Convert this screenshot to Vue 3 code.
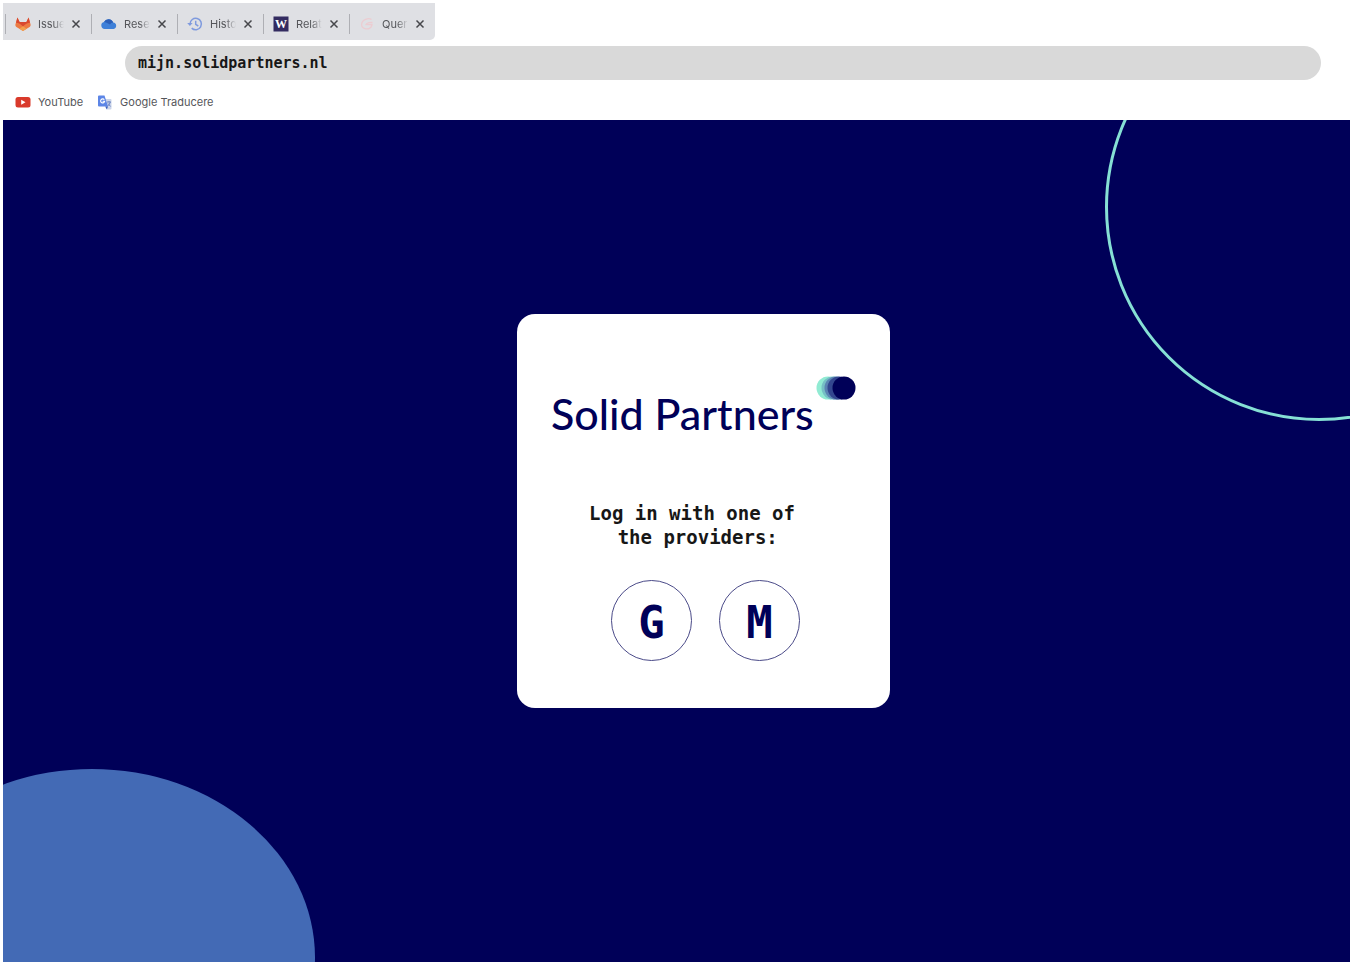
<script setup>
import { ref } from 'vue'

const address = ref('mijn.solidpartners.nl')
const tabs = [
  { icon: 'gitlab', label: 'Issue' },
  { icon: 'cloud', label: 'Rese' },
  { icon: 'history', label: 'Histo' },
  { icon: 'word', label: 'Relat' },
  { icon: 'query', label: 'Quer' },
]
</script>

<template>
  <div class="window">
    <nav class="tabs" aria-label="Open tabs">
      <div v-for="tab in tabs" :key="tab.icon" class="tab">
        <svg v-if="tab.icon === 'gitlab'" class="icon" viewBox="0 0 16 16" aria-hidden="true">
          <path d="M2.400 1.500 4.600 6h6.800l2.200-4.500L15.600 8.500c.2 1-.2 1.800-1 2.400L8 15 1.400 10.900c-.8-.6-1.200-1.400-1-2.400z" fill="#ec7a42" />
          <path d="M2.400 1.500 4.600 6h6.800l2.200-4.500 1.400 5.200c-2.500 0-5 1.700-7 3.800C6 8.400 3.500 6.700 1 6.700z" fill="#d9482f" />
          <path d="M4.500 12.800 8 10.300l3.500 2.500L8 15z" fill="#f2a04c" />
        </svg>
        <svg v-else-if="tab.icon === 'cloud'" class="icon" viewBox="0 0 16 16" aria-hidden="true">
          <path d="M3.600 13A3.500 3.500 0 0 1 3 6.100 5 5 0 0 1 12.200 6.500 3.300 3.300 0 0 1 12.600 13z" fill="#3f80d8" />
          <path d="M3 6.100a5 5 0 0 1 9.200.4C10.500 6.600 9.800 7.400 9 8.400L5 6.600z" fill="#2c5fb8" />
        </svg>
        <svg v-else-if="tab.icon === 'history'" class="icon" viewBox="0 0 16 16" fill="none" stroke="#7f9ade" stroke-width="1.500" aria-hidden="true">
          <path d="M3 8a5.700 5.700 0 1 1 1.700 4.100M8.700 4.700v3.700l2.600 1.600" />
          <path d="M.2 7h5.400L2.900 10z" fill="#7f9ade" stroke="none" />
        </svg>
        <svg v-else-if="tab.icon === 'word'" class="icon" viewBox="0 0 16 16" aria-hidden="true">
          <rect x="0.500" y="0.500" width="15" height="15" fill="#332b60" />
          <text x="8" y="12" text-anchor="middle" class="word-letter">W</text>
        </svg>
        <svg v-else class="icon" viewBox="0 0 16 16" fill="none" stroke="#ecccd1" stroke-width="1.300" aria-hidden="true">
          <path d="M12.500 3.500C9.500 1.500 3 3.500 2.600 8.500c0 4.500 6 5.500 9 3M13.500 6.500c-3-.5-6 .5-6.500 2h6c0 2-1.500 3.500-3.500 4.500" />
        </svg>
        <span class="tab-label">{{ tab.label }}</span>
        <button class="close" type="button" :aria-label="'Close ' + tab.label">
          <svg viewBox="0 0 10 10" aria-hidden="true"><path d="M1.500 1.500l7 7M8.500 1.500l-7 7" /></svg>
        </button>
      </div>
    </nav>

    <div class="toolbar">
      <input v-model="address" class="address" type="text" aria-label="Address" spellcheck="false" />
    </div>

    <nav class="bookmarks" aria-label="Bookmarks">
      <a href="#">
        <svg class="icon" viewBox="0 0 16 16" aria-hidden="true">
          <rect x="0.500" y="3" width="15" height="10.500" rx="2.500" fill="#d93a2b" />
          <path d="M6.200 5.800v5l4.300-2.500z" fill="#fff" />
        </svg>
        YouTube
      </a>
      <a href="#">
        <svg class="icon" viewBox="0 0 16 16" aria-hidden="true">
          <path d="M7 5h6.500a1 1 0 0 1 1 1v8.500a1 1 0 0 1-1 1H10z" fill="#ccd5ea" />
          <path d="M2 1.500h5.500l3.500 11H2a1 1 0 0 1-1-1v-9a1 1 0 0 1 1-1z" fill="#5c85e6" />
          <path d="M7.300 5.800A2 2 0 1 0 7.600 7.300H5.600" fill="none" stroke="#fff" stroke-width="1.100" />
          <path d="M8.200 12.500H11l-1.200 3z" fill="#3a5fbc" />
          <path d="M10 8h4M12 7v1M13.300 8c-.4 1.800-1.400 3-2.600 4M11 9.500l2.600 3" fill="none" stroke="#6d86c4" stroke-width="1" />
        </svg>
        Google Traducere
      </a>
    </nav>

    <main class="stage">
      <div class="ring"></div>
      <div class="blob"></div>
      <section class="card">
        <h1 class="brand">
          <span>Solid Partners</span>
          <svg class="dots" viewBox="0 0 40 24" aria-hidden="true">
            <circle cx="12" cy="12" r="11.500" fill="#91ebd3" />
            <circle cx="17" cy="12" r="11.500" fill="#76bfc5" />
            <circle cx="20" cy="12" r="11.500" fill="#5a83b2" />
            <circle cx="23" cy="12" r="11.500" fill="#33468f" />
            <circle cx="28" cy="12" r="11.500" fill="#000058" />
          </svg>
        </h1>
        <p class="prompt">Log in with one of<br />&nbsp;the providers:</p>
        <div class="providers">
          <button type="button" aria-label="Log in with Google">G</button>
          <button type="button" aria-label="Log in with Microsoft">M</button>
        </div>
      </section>
    </main>
  </div>
</template>

<style>
body {
  margin: 0;
  background: #fff;
}
</style>

<style scoped>
.window {
  box-sizing: border-box;
  min-height: 100vh;
  padding: 3px 2px 4px 3px;
  display: flex;
  flex-direction: column;
  font-family: Inter, "Liberation Sans", sans-serif;
  font-size: 11px;
  color: #55565a;
}
.tabs {
  align-self: flex-start;
  display: flex;
  height: 37px;
  padding: 0 0 0 2px;
  align-items: center;
  background: #dfe0e4;
  border-radius: 0 0 5px 0;
}
.tab {
  box-sizing: border-box;
  width: 86px;
  height: 20px;
  margin-top: 4px;
  padding-left: 9px;
  display: flex;
  align-items: center;
  border-left: 1px solid #aeafb4;
}
.icon {
  flex: none;
  width: 16px;
  height: 16px;
}
.word-letter {
  font: bold 12px "Liberation Serif", serif;
  fill: #fff;
}
.tab-label {
  width: 26px;
  margin-left: 7px;
  overflow: hidden;
  white-space: nowrap;
  mask-image: linear-gradient(to right, #000 60%, transparent);
}
.close {
  width: 10px;
  height: 10px;
  margin-left: 7px;
  padding: 0;
  border: 0;
  background: none;
}
.close svg {
  display: block;
  fill: none;
  stroke: #46474b;
  stroke-width: 1.5;
}
.toolbar {
  display: flex;
  padding: 6px 29px 0 122px;
}
.address {
  box-sizing: border-box;
  flex: 1;
  min-width: 0;
  height: 34px;
  padding: 0 13px;
  border: 0;
  border-radius: 17px;
  background: #d9d9d9;
  color: #171717;
  font: bold 15px "DejaVu Sans Mono", monospace;
}
.bookmarks {
  display: flex;
  align-items: center;
  gap: 14px;
  height: 40px;
  padding: 3px 12px 0;
  box-sizing: border-box;
}
.bookmarks a {
  display: flex;
  align-items: center;
  gap: 7px;
  color: inherit;
  text-decoration: none;
}
.stage {
  position: relative;
  flex: 1;
  display: flex;
  align-items: center;
  justify-content: center;
  padding: 0 0 60px 54px;
  overflow: hidden;
  background: #000058;
}
.ring {
  position: absolute;
  top: -127px;
  right: -183px;
  width: 422px;
  height: 422px;
  border: 3px solid #86e0d5;
  border-radius: 50%;
}
.blob {
  position: absolute;
  left: -134px;
  bottom: -184px;
  width: 446px;
  height: 377px;
  border-radius: 50%;
  background: #436ab5;
}
.card {
  position: relative;
  box-sizing: border-box;
  width: 373px;
  padding: 62px 34px 47px;
  border-radius: 18px;
  background: #fff;
}
.brand {
  display: flex;
  align-items: flex-start;
  gap: 2px;
  margin: 0;
  font: 500 43px/52px Lato, sans-serif;
  color: #000058;
  white-space: nowrap;
}
.brand span {
  padding-top: 12px;
}
.dots {
  flex: none;
  width: 40px;
  height: 24px;
}
.prompt {
  margin: 61px 23px 0 0;
  padding-bottom: 31px;
  font: bold 19px/24px "DejaVu Sans Mono", monospace;
  text-align: center;
  white-space: nowrap;
  color: #171717;
}
.providers {
  display: flex;
  justify-content: center;
  gap: 27px;
  padding-left: 4px;
}
.providers button {
  width: 81px;
  height: 81px;
  padding: 4px 0 0;
  border: 1px solid #4a4a88;
  border-radius: 50%;
  background: none;
  color: #000058;
  font: bold 44px/48px "DejaVu Sans Mono", monospace;
}
</style>
